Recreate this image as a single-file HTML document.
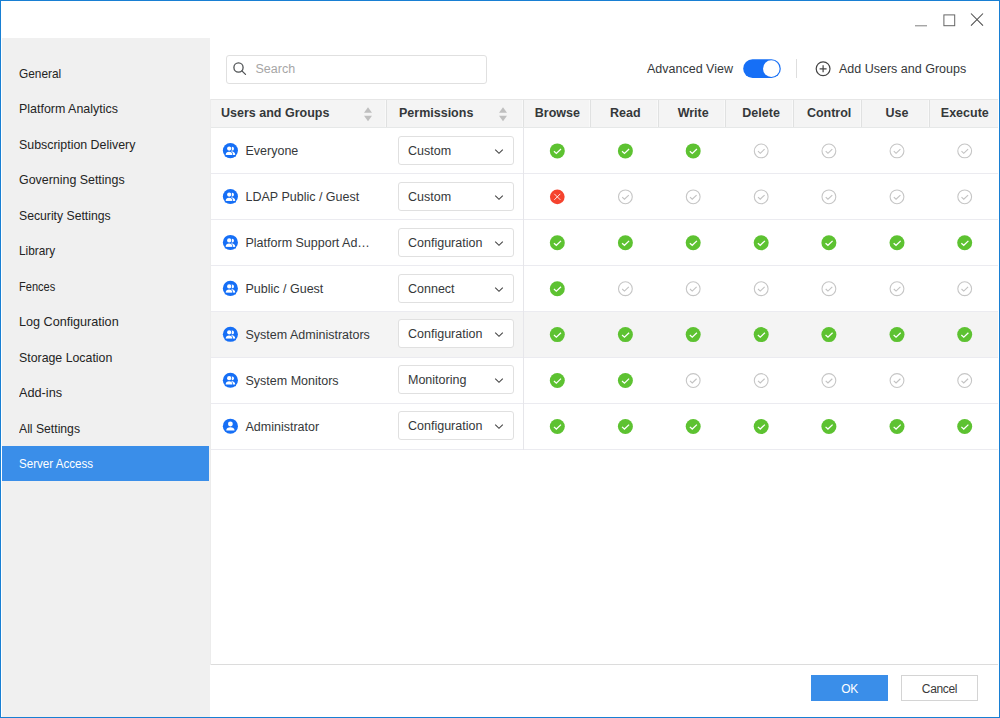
<!DOCTYPE html>
<html lang="en">
<head>
<meta charset="utf-8">
<title>Server Access</title>
<style>
*{box-sizing:border-box;margin:0;padding:0}
html,body{width:1000px;height:718px;overflow:hidden;background:#fff}
body{position:relative;font-family:"Liberation Sans",Arial,sans-serif;font-size:13px;color:#35383a}
#frame{position:absolute;left:0;top:0;width:1000px;height:718px;border:1px solid #187fd3;pointer-events:none;z-index:10}
#side{position:absolute;left:2px;top:38px;width:208px;height:679px;background:#f0f0f0}
#side .it{position:absolute;left:0;width:207px;height:35px;line-height:35px;padding-left:17px;font-size:13px;color:#242424;white-space:nowrap}
#side .it span{display:inline-block;transform-origin:0 50%}
#side .it.sel{background:#3a8ee9;color:#fff}
.wc{position:absolute}
#search{position:absolute;left:226px;top:55px;width:261px;height:29px;border:1px solid #e0e0e0;border-radius:3px;background:#fff}
#search span{position:absolute;left:28.500px;top:0;line-height:27px;font-size:12.5px;color:#a6a6a6}
#adv{position:absolute;left:647px;top:60px;line-height:19px;font-size:12.5px;color:#35383a;white-space:nowrap}
#vd{position:absolute;left:796px;top:59px;width:1px;height:19px;background:#dedede}
#add{position:absolute;left:839px;top:60px;line-height:19px;font-size:12.5px;color:#35383a;white-space:nowrap}
#tbl{position:absolute;left:211px;top:99px;width:787px}
.hd{position:absolute;left:0;top:0;width:787px;height:29px;background:#f4f4f4;border-top:1px solid #e6e6e6;border-bottom:1px solid #e6e8e8}
.hd .c{position:absolute;top:0;height:27px;line-height:27px;font-weight:bold;font-size:12.5px;color:#35383a;white-space:nowrap}
.hd .dv{position:absolute;top:0;width:1px;height:27px;background:#e0e1e1;box-shadow:-1px 0 0 #f9f9f9}
.hd .c.ctr{text-align:center}
.row{position:absolute;left:0;width:787px;height:46px;border-bottom:1px solid #ebebf0}
.row.hl{background:#f4f4f4}
.row .nm{position:absolute;left:34.500px;top:1px;line-height:45px;font-size:12.5px;color:#35383a;white-space:nowrap}
.row .sel{position:absolute;left:187px;top:8px;width:116px;height:29px;border:1px solid #e0e0e0;border-radius:3px;background:#fff;line-height:29px;padding-left:9px;font-size:12.5px;color:#35383a;white-space:nowrap}
.row .sel svg{position:absolute;right:9.200px;top:10.800px}
.row .ics{position:absolute;left:0;top:0}
#vline{position:absolute;left:523px;top:128px;width:1px;height:322px;background:#e6e6ea}
#lb{position:absolute;left:210px;top:99px;width:1px;height:566px;background:#ececec}
#hline{position:absolute;left:211px;top:664px;width:787px;height:1px;background:#dcdcdc}
#ok{position:absolute;left:811px;top:675px;width:77px;height:26px;background:#3a8ee9;color:#fff;text-align:center;line-height:29px;font-size:12px;letter-spacing:-0.35px}
#cancel{position:absolute;left:901px;top:675px;width:77px;height:26px;background:#fff;border:1px solid #d4d4d4;color:#3a3a3a;text-align:center;line-height:27px;font-size:12px;letter-spacing:-0.35px}
</style>
</head>
<body>
<div id="frame"></div>
<div id="side">
<div class="it" style="top:18px"><span style="transform:scaleX(0.913)">General</span></div>
<div class="it" style="top:53px"><span style="transform:scaleX(0.957)">Platform Analytics</span></div>
<div class="it" style="top:89px"><span style="transform:scaleX(0.953)">Subscription Delivery</span></div>
<div class="it" style="top:124px"><span style="transform:scaleX(0.955)">Governing Settings</span></div>
<div class="it" style="top:160px"><span style="transform:scaleX(0.939)">Security Settings</span></div>
<div class="it" style="top:195px"><span style="transform:scaleX(0.910)">Library</span></div>
<div class="it" style="top:231px"><span style="transform:scaleX(0.851)">Fences</span></div>
<div class="it" style="top:266px"><span style="transform:scaleX(0.971)">Log Configuration</span></div>
<div class="it" style="top:302px"><span style="transform:scaleX(0.949)">Storage Location</span></div>
<div class="it" style="top:337px"><span style="transform:scaleX(0.978)">Add-ins</span></div>
<div class="it" style="top:373px"><span style="transform:scaleX(0.938)">All Settings</span></div>
<div class="it sel" style="top:408px"><span style="transform:scaleX(0.891)">Server Access</span></div>
</div>
<svg class="wc" style="left:910px;top:8px" width="80" height="24" viewBox="0 0 80 24" fill="none" stroke="#5a5a5a" stroke-width="1">
<path d="M5 17.800H17" stroke="#808080"/><rect x="33.900" y="6.900" width="10.800" height="10.800" stroke="#666"/><path d="M61 5.500L73 17.700M73 5.500L61 17.700" stroke="#4a4a4a" stroke-width="1.050"/>
</svg>
<div id="search">
<svg style="position:absolute;left:5.400px;top:5.150px" width="16" height="16" viewBox="0 0 16 16" fill="none" stroke="#505355" stroke-width="1.300"><circle cx="6.500" cy="6.500" r="4.600"/><path d="M9.900 9.900L13.500 13.400" stroke-linecap="round"/></svg>
<span>Search</span>
</div>
<div id="adv">Advanced View</div>
<svg style="position:absolute;left:740px;top:56px" width="44" height="26" viewBox="0 0 44 26"><rect x="3.200" y="3.300" width="37.600" height="18.700" rx="9.350" fill="#166ff6"/><circle cx="31.300" cy="12.650" r="8.300" fill="#fff"/></svg>
<div id="vd"></div>
<svg style="position:absolute;left:815px;top:61px" width="16" height="16" viewBox="0 0 16 16" fill="none" stroke="#444" stroke-width="1.2"><circle cx="8.100" cy="7.800" r="6.900"/><path d="M8.100 4.300V11.300M4.600 7.800H11.600"/></svg>
<div id="add">Add Users and Groups</div>
<div id="tbl">
<div class="hd">
<div class="c" style="left:10px">Users and Groups</div>
<div class="c" style="left:188px">Permissions</div>
<svg style="position:absolute;left:152px;top:6px" width="10" height="16" viewBox="0 0 10 16"><path d="M5 1.200L9 6.800H1z" fill="#bfbfbf"/><path d="M1 9.700H9L5 15.300z" fill="#bfbfbf"/></svg><svg style="position:absolute;left:287px;top:6px" width="10" height="16" viewBox="0 0 10 16"><path d="M5 1.200L9 6.800H1z" fill="#bfbfbf"/><path d="M1 9.700H9L5 15.300z" fill="#bfbfbf"/></svg>
<div class="c ctr" style="left:316.4px;width:60px">Browse</div>
<div class="c ctr" style="left:384.3px;width:60px">Read</div>
<div class="c ctr" style="left:452.2px;width:60px">Write</div>
<div class="c ctr" style="left:520.1px;width:60px">Delete</div>
<div class="c ctr" style="left:588.1px;width:60px">Control</div>
<div class="c ctr" style="left:655.9px;width:60px">Use</div>
<div class="c ctr" style="left:723.8px;width:60px">Execute</div>
<i class="dv" style="left:175px"></i><i class="dv" style="left:312px"></i><i class="dv" style="left:379px"></i><i class="dv" style="left:447px"></i><i class="dv" style="left:514px"></i><i class="dv" style="left:582px"></i><i class="dv" style="left:650px"></i><i class="dv" style="left:718px"></i>
</div>
<!--ROWS-->
<div class="row" style="top:29px"><svg class="ics" width="787" height="45" viewBox="0 0 787 45"><g transform="translate(11.85 15.05) scale(0.5033)"><circle cx="15" cy="15" r="15" fill="#166ff6"/><circle cx="18.400" cy="11.200" r="3.700" fill="#fff"/><path d="M16 16.400c5 0 8.600 2.600 8.600 7.400h-8.600z" fill="#fff"/><circle cx="12.600" cy="11" r="5.600" fill="#166ff6"/><path d="M5.600 23.800c0-4.600 3-6.600 6.700-6.600s6.700 2 6.700 6.600z" fill="#fff" stroke="#166ff6" stroke-width="2.600"/><circle cx="12.600" cy="11" r="4.200" fill="#fff"/><path d="M5.600 23.800c0-4.600 3-6.600 6.700-6.600s6.700 2 6.700 6.600z" fill="#fff"/><path d="M4 23.800h22v3h-22z" fill="#166ff6"/></g><g transform="translate(338.80 15.40) scale(0.5000)"><circle cx="15" cy="15" r="15" fill="#5dc231"/><path d="M8.300 15.800L13.100 20.100L22.400 11.200" fill="none" stroke="#fff" stroke-width="2.500"/></g><g transform="translate(406.90 15.40) scale(0.5000)"><circle cx="15" cy="15" r="15" fill="#5dc231"/><path d="M8.300 15.800L13.100 20.100L22.400 11.200" fill="none" stroke="#fff" stroke-width="2.500"/></g><g transform="translate(474.70 15.40) scale(0.5000)"><circle cx="15" cy="15" r="15" fill="#5dc231"/><path d="M8.300 15.800L13.100 20.100L22.400 11.200" fill="none" stroke="#fff" stroke-width="2.500"/></g><g transform="translate(542.70 15.40) scale(0.5000)"><circle cx="15" cy="15" r="13.800" fill="#fff" stroke="#c6c6c6" stroke-width="2.200"/><path d="M8.600 15.600L13.100 19.800L21.800 11.400" fill="none" stroke="#c2c2c2" stroke-width="2.200"/></g><g transform="translate(610.40 15.40) scale(0.5000)"><circle cx="15" cy="15" r="13.800" fill="#fff" stroke="#c6c6c6" stroke-width="2.200"/><path d="M8.600 15.600L13.100 19.800L21.800 11.400" fill="none" stroke="#c2c2c2" stroke-width="2.200"/></g><g transform="translate(678.50 15.40) scale(0.5000)"><circle cx="15" cy="15" r="13.800" fill="#fff" stroke="#c6c6c6" stroke-width="2.200"/><path d="M8.600 15.600L13.100 19.800L21.800 11.400" fill="none" stroke="#c2c2c2" stroke-width="2.200"/></g><g transform="translate(746.20 15.40) scale(0.5000)"><circle cx="15" cy="15" r="13.800" fill="#fff" stroke="#c6c6c6" stroke-width="2.200"/><path d="M8.600 15.600L13.100 19.800L21.800 11.400" fill="none" stroke="#c2c2c2" stroke-width="2.200"/></g></svg><div class="nm" style="top:1.0px">Everyone</div><div class="sel" style="top:8px">Custom<svg width="10" height="7" viewBox="0 0 10 7" fill="none" stroke="#444" stroke-width="1.100"><path d="M1.200 1.600L5 5.300l3.800-3.700"/></svg></div></div>
<div class="row" style="top:75px"><svg class="ics" width="787" height="45" viewBox="0 0 787 45"><g transform="translate(11.85 14.98) scale(0.5033)"><circle cx="15" cy="15" r="15" fill="#166ff6"/><circle cx="18.400" cy="11.200" r="3.700" fill="#fff"/><path d="M16 16.400c5 0 8.600 2.600 8.600 7.400h-8.600z" fill="#fff"/><circle cx="12.600" cy="11" r="5.600" fill="#166ff6"/><path d="M5.600 23.800c0-4.600 3-6.600 6.700-6.600s6.700 2 6.700 6.600z" fill="#fff" stroke="#166ff6" stroke-width="2.600"/><circle cx="12.600" cy="11" r="4.200" fill="#fff"/><path d="M5.600 23.800c0-4.600 3-6.600 6.700-6.600s6.700 2 6.700 6.600z" fill="#fff"/><path d="M4 23.800h22v3h-22z" fill="#166ff6"/></g><g transform="translate(338.80 15.33) scale(0.5000)"><circle cx="15" cy="15" r="14.700" fill="#f5432e"/><path d="M9 9L21 21M21 9L9 21" fill="none" stroke="#fff" stroke-width="1.900" stroke-opacity=".92"/></g><g transform="translate(406.90 15.33) scale(0.5000)"><circle cx="15" cy="15" r="13.800" fill="#fff" stroke="#c6c6c6" stroke-width="2.200"/><path d="M8.600 15.600L13.100 19.800L21.800 11.400" fill="none" stroke="#c2c2c2" stroke-width="2.200"/></g><g transform="translate(474.70 15.33) scale(0.5000)"><circle cx="15" cy="15" r="13.800" fill="#fff" stroke="#c6c6c6" stroke-width="2.200"/><path d="M8.600 15.600L13.100 19.800L21.800 11.400" fill="none" stroke="#c2c2c2" stroke-width="2.200"/></g><g transform="translate(542.70 15.33) scale(0.5000)"><circle cx="15" cy="15" r="13.800" fill="#fff" stroke="#c6c6c6" stroke-width="2.200"/><path d="M8.600 15.600L13.100 19.800L21.800 11.400" fill="none" stroke="#c2c2c2" stroke-width="2.200"/></g><g transform="translate(610.40 15.33) scale(0.5000)"><circle cx="15" cy="15" r="13.800" fill="#fff" stroke="#c6c6c6" stroke-width="2.200"/><path d="M8.600 15.600L13.100 19.800L21.800 11.400" fill="none" stroke="#c2c2c2" stroke-width="2.200"/></g><g transform="translate(678.50 15.33) scale(0.5000)"><circle cx="15" cy="15" r="13.800" fill="#fff" stroke="#c6c6c6" stroke-width="2.200"/><path d="M8.600 15.600L13.100 19.800L21.800 11.400" fill="none" stroke="#c2c2c2" stroke-width="2.200"/></g><g transform="translate(746.20 15.33) scale(0.5000)"><circle cx="15" cy="15" r="13.800" fill="#fff" stroke="#c6c6c6" stroke-width="2.200"/><path d="M8.600 15.600L13.100 19.800L21.800 11.400" fill="none" stroke="#c2c2c2" stroke-width="2.200"/></g></svg><div class="nm" style="top:0.93px">LDAP Public / Guest</div><div class="sel" style="top:8px">Custom<svg width="10" height="7" viewBox="0 0 10 7" fill="none" stroke="#444" stroke-width="1.100"><path d="M1.200 1.600L5 5.300l3.800-3.700"/></svg></div></div>
<div class="row" style="top:121px"><svg class="ics" width="787" height="45" viewBox="0 0 787 45"><g transform="translate(11.85 14.91) scale(0.5033)"><circle cx="15" cy="15" r="15" fill="#166ff6"/><circle cx="18.400" cy="11.200" r="3.700" fill="#fff"/><path d="M16 16.400c5 0 8.600 2.600 8.600 7.400h-8.600z" fill="#fff"/><circle cx="12.600" cy="11" r="5.600" fill="#166ff6"/><path d="M5.600 23.800c0-4.600 3-6.600 6.700-6.600s6.700 2 6.700 6.600z" fill="#fff" stroke="#166ff6" stroke-width="2.600"/><circle cx="12.600" cy="11" r="4.200" fill="#fff"/><path d="M5.600 23.800c0-4.600 3-6.600 6.700-6.600s6.700 2 6.700 6.600z" fill="#fff"/><path d="M4 23.800h22v3h-22z" fill="#166ff6"/></g><g transform="translate(338.80 15.26) scale(0.5000)"><circle cx="15" cy="15" r="15" fill="#5dc231"/><path d="M8.300 15.800L13.100 20.100L22.400 11.200" fill="none" stroke="#fff" stroke-width="2.500"/></g><g transform="translate(406.90 15.26) scale(0.5000)"><circle cx="15" cy="15" r="15" fill="#5dc231"/><path d="M8.300 15.800L13.100 20.100L22.400 11.200" fill="none" stroke="#fff" stroke-width="2.500"/></g><g transform="translate(474.70 15.26) scale(0.5000)"><circle cx="15" cy="15" r="15" fill="#5dc231"/><path d="M8.300 15.800L13.100 20.100L22.400 11.200" fill="none" stroke="#fff" stroke-width="2.500"/></g><g transform="translate(542.70 15.26) scale(0.5000)"><circle cx="15" cy="15" r="15" fill="#5dc231"/><path d="M8.300 15.800L13.100 20.100L22.400 11.200" fill="none" stroke="#fff" stroke-width="2.500"/></g><g transform="translate(610.40 15.26) scale(0.5000)"><circle cx="15" cy="15" r="15" fill="#5dc231"/><path d="M8.300 15.800L13.100 20.100L22.400 11.200" fill="none" stroke="#fff" stroke-width="2.500"/></g><g transform="translate(678.50 15.26) scale(0.5000)"><circle cx="15" cy="15" r="15" fill="#5dc231"/><path d="M8.300 15.800L13.100 20.100L22.400 11.200" fill="none" stroke="#fff" stroke-width="2.500"/></g><g transform="translate(746.20 15.26) scale(0.5000)"><circle cx="15" cy="15" r="15" fill="#5dc231"/><path d="M8.300 15.800L13.100 20.100L22.400 11.200" fill="none" stroke="#fff" stroke-width="2.500"/></g></svg><div class="nm" style="top:0.86px">Platform Support Ad…</div><div class="sel" style="top:8px">Configuration<svg width="10" height="7" viewBox="0 0 10 7" fill="none" stroke="#444" stroke-width="1.100"><path d="M1.200 1.600L5 5.300l3.800-3.700"/></svg></div></div>
<div class="row" style="top:167px"><svg class="ics" width="787" height="45" viewBox="0 0 787 45"><g transform="translate(11.85 14.84) scale(0.5033)"><circle cx="15" cy="15" r="15" fill="#166ff6"/><circle cx="18.400" cy="11.200" r="3.700" fill="#fff"/><path d="M16 16.400c5 0 8.600 2.600 8.600 7.400h-8.600z" fill="#fff"/><circle cx="12.600" cy="11" r="5.600" fill="#166ff6"/><path d="M5.600 23.800c0-4.600 3-6.600 6.700-6.600s6.700 2 6.700 6.600z" fill="#fff" stroke="#166ff6" stroke-width="2.600"/><circle cx="12.600" cy="11" r="4.200" fill="#fff"/><path d="M5.600 23.800c0-4.600 3-6.600 6.700-6.600s6.700 2 6.700 6.600z" fill="#fff"/><path d="M4 23.800h22v3h-22z" fill="#166ff6"/></g><g transform="translate(338.80 15.19) scale(0.5000)"><circle cx="15" cy="15" r="15" fill="#5dc231"/><path d="M8.300 15.800L13.100 20.100L22.400 11.200" fill="none" stroke="#fff" stroke-width="2.500"/></g><g transform="translate(406.90 15.19) scale(0.5000)"><circle cx="15" cy="15" r="13.800" fill="#fff" stroke="#c6c6c6" stroke-width="2.200"/><path d="M8.600 15.600L13.100 19.800L21.800 11.400" fill="none" stroke="#c2c2c2" stroke-width="2.200"/></g><g transform="translate(474.70 15.19) scale(0.5000)"><circle cx="15" cy="15" r="13.800" fill="#fff" stroke="#c6c6c6" stroke-width="2.200"/><path d="M8.600 15.600L13.100 19.800L21.800 11.400" fill="none" stroke="#c2c2c2" stroke-width="2.200"/></g><g transform="translate(542.70 15.19) scale(0.5000)"><circle cx="15" cy="15" r="13.800" fill="#fff" stroke="#c6c6c6" stroke-width="2.200"/><path d="M8.600 15.600L13.100 19.800L21.800 11.400" fill="none" stroke="#c2c2c2" stroke-width="2.200"/></g><g transform="translate(610.40 15.19) scale(0.5000)"><circle cx="15" cy="15" r="13.800" fill="#fff" stroke="#c6c6c6" stroke-width="2.200"/><path d="M8.600 15.600L13.100 19.800L21.800 11.400" fill="none" stroke="#c2c2c2" stroke-width="2.200"/></g><g transform="translate(678.50 15.19) scale(0.5000)"><circle cx="15" cy="15" r="13.800" fill="#fff" stroke="#c6c6c6" stroke-width="2.200"/><path d="M8.600 15.600L13.100 19.800L21.800 11.400" fill="none" stroke="#c2c2c2" stroke-width="2.200"/></g><g transform="translate(746.20 15.19) scale(0.5000)"><circle cx="15" cy="15" r="13.800" fill="#fff" stroke="#c6c6c6" stroke-width="2.200"/><path d="M8.600 15.600L13.100 19.800L21.800 11.400" fill="none" stroke="#c2c2c2" stroke-width="2.200"/></g></svg><div class="nm" style="top:0.79px">Public / Guest</div><div class="sel" style="top:8px">Connect<svg width="10" height="7" viewBox="0 0 10 7" fill="none" stroke="#444" stroke-width="1.100"><path d="M1.200 1.600L5 5.300l3.800-3.700"/></svg></div></div>
<div class="row hl" style="top:213px"><svg class="ics" width="787" height="45" viewBox="0 0 787 45"><g transform="translate(11.85 14.77) scale(0.5033)"><circle cx="15" cy="15" r="15" fill="#166ff6"/><circle cx="18.400" cy="11.200" r="3.700" fill="#fff"/><path d="M16 16.400c5 0 8.600 2.600 8.600 7.400h-8.600z" fill="#fff"/><circle cx="12.600" cy="11" r="5.600" fill="#166ff6"/><path d="M5.600 23.800c0-4.600 3-6.600 6.700-6.600s6.700 2 6.700 6.600z" fill="#fff" stroke="#166ff6" stroke-width="2.600"/><circle cx="12.600" cy="11" r="4.200" fill="#fff"/><path d="M5.600 23.800c0-4.600 3-6.600 6.700-6.600s6.700 2 6.700 6.600z" fill="#fff"/><path d="M4 23.800h22v3h-22z" fill="#166ff6"/></g><g transform="translate(338.80 15.12) scale(0.5000)"><circle cx="15" cy="15" r="15" fill="#5dc231"/><path d="M8.300 15.800L13.100 20.100L22.400 11.200" fill="none" stroke="#fff" stroke-width="2.500"/></g><g transform="translate(406.90 15.12) scale(0.5000)"><circle cx="15" cy="15" r="15" fill="#5dc231"/><path d="M8.300 15.800L13.100 20.100L22.400 11.200" fill="none" stroke="#fff" stroke-width="2.500"/></g><g transform="translate(474.70 15.12) scale(0.5000)"><circle cx="15" cy="15" r="15" fill="#5dc231"/><path d="M8.300 15.800L13.100 20.100L22.400 11.200" fill="none" stroke="#fff" stroke-width="2.500"/></g><g transform="translate(542.70 15.12) scale(0.5000)"><circle cx="15" cy="15" r="15" fill="#5dc231"/><path d="M8.300 15.800L13.100 20.100L22.400 11.200" fill="none" stroke="#fff" stroke-width="2.500"/></g><g transform="translate(610.40 15.12) scale(0.5000)"><circle cx="15" cy="15" r="15" fill="#5dc231"/><path d="M8.300 15.800L13.100 20.100L22.400 11.200" fill="none" stroke="#fff" stroke-width="2.500"/></g><g transform="translate(678.50 15.12) scale(0.5000)"><circle cx="15" cy="15" r="15" fill="#5dc231"/><path d="M8.300 15.800L13.100 20.100L22.400 11.200" fill="none" stroke="#fff" stroke-width="2.500"/></g><g transform="translate(746.20 15.12) scale(0.5000)"><circle cx="15" cy="15" r="15" fill="#5dc231"/><path d="M8.300 15.800L13.100 20.100L22.400 11.200" fill="none" stroke="#fff" stroke-width="2.500"/></g></svg><div class="nm" style="top:0.72px">System Administrators</div><div class="sel" style="top:7px">Configuration<svg width="10" height="7" viewBox="0 0 10 7" fill="none" stroke="#444" stroke-width="1.100"><path d="M1.200 1.600L5 5.300l3.800-3.700"/></svg></div></div>
<div class="row" style="top:259px"><svg class="ics" width="787" height="45" viewBox="0 0 787 45"><g transform="translate(11.85 14.70) scale(0.5033)"><circle cx="15" cy="15" r="15" fill="#166ff6"/><circle cx="18.400" cy="11.200" r="3.700" fill="#fff"/><path d="M16 16.400c5 0 8.600 2.600 8.600 7.400h-8.600z" fill="#fff"/><circle cx="12.600" cy="11" r="5.600" fill="#166ff6"/><path d="M5.600 23.800c0-4.600 3-6.600 6.700-6.600s6.700 2 6.700 6.600z" fill="#fff" stroke="#166ff6" stroke-width="2.600"/><circle cx="12.600" cy="11" r="4.200" fill="#fff"/><path d="M5.600 23.800c0-4.600 3-6.600 6.700-6.600s6.700 2 6.700 6.600z" fill="#fff"/><path d="M4 23.800h22v3h-22z" fill="#166ff6"/></g><g transform="translate(338.80 15.05) scale(0.5000)"><circle cx="15" cy="15" r="15" fill="#5dc231"/><path d="M8.300 15.800L13.100 20.100L22.400 11.200" fill="none" stroke="#fff" stroke-width="2.500"/></g><g transform="translate(406.90 15.05) scale(0.5000)"><circle cx="15" cy="15" r="15" fill="#5dc231"/><path d="M8.300 15.800L13.100 20.100L22.400 11.200" fill="none" stroke="#fff" stroke-width="2.500"/></g><g transform="translate(474.70 15.05) scale(0.5000)"><circle cx="15" cy="15" r="13.800" fill="#fff" stroke="#c6c6c6" stroke-width="2.200"/><path d="M8.600 15.600L13.100 19.800L21.800 11.400" fill="none" stroke="#c2c2c2" stroke-width="2.200"/></g><g transform="translate(542.70 15.05) scale(0.5000)"><circle cx="15" cy="15" r="13.800" fill="#fff" stroke="#c6c6c6" stroke-width="2.200"/><path d="M8.600 15.600L13.100 19.800L21.800 11.400" fill="none" stroke="#c2c2c2" stroke-width="2.200"/></g><g transform="translate(610.40 15.05) scale(0.5000)"><circle cx="15" cy="15" r="13.800" fill="#fff" stroke="#c6c6c6" stroke-width="2.200"/><path d="M8.600 15.600L13.100 19.800L21.800 11.400" fill="none" stroke="#c2c2c2" stroke-width="2.200"/></g><g transform="translate(678.50 15.05) scale(0.5000)"><circle cx="15" cy="15" r="13.800" fill="#fff" stroke="#c6c6c6" stroke-width="2.200"/><path d="M8.600 15.600L13.100 19.800L21.800 11.400" fill="none" stroke="#c2c2c2" stroke-width="2.200"/></g><g transform="translate(746.20 15.05) scale(0.5000)"><circle cx="15" cy="15" r="13.800" fill="#fff" stroke="#c6c6c6" stroke-width="2.200"/><path d="M8.600 15.600L13.100 19.800L21.800 11.400" fill="none" stroke="#c2c2c2" stroke-width="2.200"/></g></svg><div class="nm" style="top:0.65px">System Monitors</div><div class="sel" style="top:7px">Monitoring<svg width="10" height="7" viewBox="0 0 10 7" fill="none" stroke="#444" stroke-width="1.100"><path d="M1.200 1.600L5 5.300l3.800-3.700"/></svg></div></div>
<div class="row" style="top:305px"><svg class="ics" width="787" height="45" viewBox="0 0 787 45"><g transform="translate(11.85 14.63) scale(0.5033)"><circle cx="15" cy="15" r="15" fill="#166ff6"/><circle cx="15" cy="10.600" r="4.800" fill="#fff"/><path d="M6.800 23.400c0-4.400 3.600-6.400 8.200-6.400s8.200 2 8.200 6.400z" fill="#fff"/></g><g transform="translate(338.80 14.98) scale(0.5000)"><circle cx="15" cy="15" r="15" fill="#5dc231"/><path d="M8.300 15.800L13.100 20.100L22.400 11.200" fill="none" stroke="#fff" stroke-width="2.500"/></g><g transform="translate(406.90 14.98) scale(0.5000)"><circle cx="15" cy="15" r="15" fill="#5dc231"/><path d="M8.300 15.800L13.100 20.100L22.400 11.200" fill="none" stroke="#fff" stroke-width="2.500"/></g><g transform="translate(474.70 14.98) scale(0.5000)"><circle cx="15" cy="15" r="15" fill="#5dc231"/><path d="M8.300 15.800L13.100 20.100L22.400 11.200" fill="none" stroke="#fff" stroke-width="2.500"/></g><g transform="translate(542.70 14.98) scale(0.5000)"><circle cx="15" cy="15" r="15" fill="#5dc231"/><path d="M8.300 15.800L13.100 20.100L22.400 11.200" fill="none" stroke="#fff" stroke-width="2.500"/></g><g transform="translate(610.40 14.98) scale(0.5000)"><circle cx="15" cy="15" r="15" fill="#5dc231"/><path d="M8.300 15.800L13.100 20.100L22.400 11.200" fill="none" stroke="#fff" stroke-width="2.500"/></g><g transform="translate(678.50 14.98) scale(0.5000)"><circle cx="15" cy="15" r="15" fill="#5dc231"/><path d="M8.300 15.800L13.100 20.100L22.400 11.200" fill="none" stroke="#fff" stroke-width="2.500"/></g><g transform="translate(746.20 14.98) scale(0.5000)"><circle cx="15" cy="15" r="15" fill="#5dc231"/><path d="M8.300 15.800L13.100 20.100L22.400 11.200" fill="none" stroke="#fff" stroke-width="2.500"/></g></svg><div class="nm" style="top:0.58px">Administrator</div><div class="sel" style="top:7px">Configuration<svg width="10" height="7" viewBox="0 0 10 7" fill="none" stroke="#444" stroke-width="1.100"><path d="M1.200 1.600L5 5.300l3.800-3.700"/></svg></div></div>
<!--/ROWS-->
</div>
<div id="vline"></div>
<div id="lb"></div>
<div id="hline"></div>
<div id="ok">OK</div>
<div id="cancel">Cancel</div>
</body>
</html>
